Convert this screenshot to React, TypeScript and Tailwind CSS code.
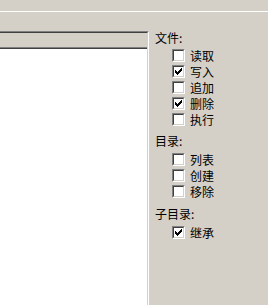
import React from 'react';

const font = { fontFamily: '"Noto Sans CJK SC", "Noto Sans", sans-serif' };

function Check({ checked }: { checked?: boolean }) {
    return (
        <div className="w-[13px] h-[13px] shrink-0 border border-t-[#808080] border-l-[#808080] border-b-white border-r-white">
            <div className="w-full h-full border border-t-[#404040] border-l-[#404040] border-b-[#d4d0c8] border-r-[#d4d0c8] bg-white relative">
                {checked && (
                    <svg width="9" height="9" viewBox="0 0 9 9" className="absolute left-0 top-0" shapeRendering="crispEdges">
                        <rect x="1" y="3" width="1" height="3" fill="#000" />
                        <rect x="2" y="4" width="1" height="3" fill="#000" />
                        <rect x="3" y="5" width="1" height="3" fill="#000" />
                        <rect x="4" y="4" width="1" height="3" fill="#000" />
                        <rect x="5" y="3" width="1" height="3" fill="#000" />
                        <rect x="6" y="2" width="1" height="3" fill="#000" />
                        <rect x="7" y="1" width="1" height="3" fill="#000" />
                    </svg>
                )}
            </div>
        </div>
    );
}

function Row({ label, checked }: { label: string; checked?: boolean }) {
    return (
        <div className="flex items-start h-[16px] pl-[17px]">
            <div className="mt-[1px]"><Check checked={checked} /></div>
            <span className="ml-[5px] text-[12px] leading-[15px] text-black">{label}</span>
        </div>
    );
}

export default function App() {
    return (
        <div className="w-[268px] h-[305px] bg-[#d4d0c8] flex flex-col overflow-hidden" style={font}>
            {/* top strip */}
            <div className="h-[12px] shrink-0 border-b border-white" />

            <div className="flex flex-1 min-h-0">
                {/* left list panel */}
                <div className="w-[149px] mt-[19px] shrink-0 border-t border-r border-t-[#808080] border-r-white flex flex-col">
                    <div className="flex-1 border-t border-r border-t-[#404040] border-r-[#d4d0c8] flex flex-col">
                        <div className="h-[14px] shrink-0 bg-[#d4d0c8]" />
                        <div className="flex-1 border-t border-[#808080]">
                            <div className="h-full border-t border-[#404040] bg-white" />
                        </div>
                    </div>
                </div>

                {/* permissions */}
                <div className="flex-1 pl-[6px] pt-[18px] flex flex-col text-[12px] text-black">
                    <div className="h-[16px] leading-[16px]">文件:</div>
                    <div className="mt-[2px]">
                        <Row label="读取" />
                        <Row label="写入" checked />
                        <Row label="追加" />
                        <Row label="删除" checked />
                        <Row label="执行" />
                    </div>

                    <div className="mt-[5px] h-[16px] leading-[16px]">目录:</div>
                    <div className="mt-[3px]">
                        <Row label="列表" />
                        <Row label="创建" />
                        <Row label="移除" />
                    </div>

                    <div className="mt-[6px] h-[16px] leading-[16px]">子目录:</div>
                    <div className="mt-[3px]">
                        <Row label="继承" checked />
                    </div>
                </div>
            </div>
        </div>
    );
}
